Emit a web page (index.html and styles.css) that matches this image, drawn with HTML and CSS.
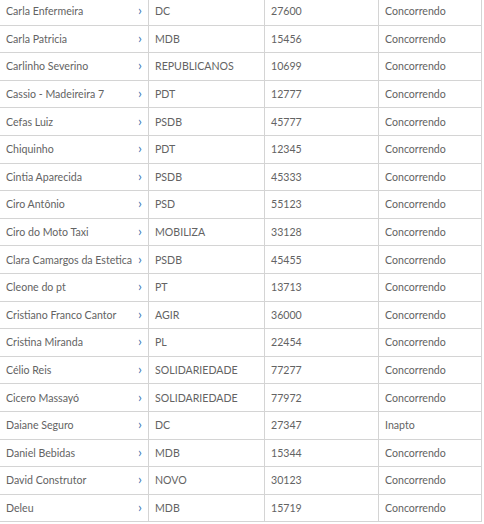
FILE: index.html
```html
<!DOCTYPE html>
<html lang="pt">
<head>
<meta charset="utf-8">
<link rel="stylesheet" href="styles.css">
</head>
<body>
<div class="table">
  <div class="row"><div class="cell name"><span>Carla Enfermeira</span><span class="chev">›</span></div><div class="cell">DC</div><div class="cell">27600</div><div class="cell">Concorrendo</div></div>
  <div class="row"><div class="cell name"><span>Carla Patricia</span><span class="chev">›</span></div><div class="cell">MDB</div><div class="cell">15456</div><div class="cell">Concorrendo</div></div>
  <div class="row"><div class="cell name"><span>Carlinho Severino</span><span class="chev">›</span></div><div class="cell">REPUBLICANOS</div><div class="cell">10699</div><div class="cell">Concorrendo</div></div>
  <div class="row"><div class="cell name"><span>Cassio - Madeireira 7</span><span class="chev">›</span></div><div class="cell">PDT</div><div class="cell">12777</div><div class="cell">Concorrendo</div></div>
  <div class="row"><div class="cell name"><span>Cefas Luiz</span><span class="chev">›</span></div><div class="cell">PSDB</div><div class="cell">45777</div><div class="cell">Concorrendo</div></div>
  <div class="row"><div class="cell name"><span>Chiquinho</span><span class="chev">›</span></div><div class="cell">PDT</div><div class="cell">12345</div><div class="cell">Concorrendo</div></div>
  <div class="row"><div class="cell name"><span>Cintia Aparecida</span><span class="chev">›</span></div><div class="cell">PSDB</div><div class="cell">45333</div><div class="cell">Concorrendo</div></div>
  <div class="row"><div class="cell name"><span>Ciro Antônio</span><span class="chev">›</span></div><div class="cell">PSD</div><div class="cell">55123</div><div class="cell">Concorrendo</div></div>
  <div class="row"><div class="cell name"><span>Ciro do Moto Taxi</span><span class="chev">›</span></div><div class="cell">MOBILIZA</div><div class="cell">33128</div><div class="cell">Concorrendo</div></div>
  <div class="row"><div class="cell name"><span>Clara Camargos da Estetica</span><span class="chev">›</span></div><div class="cell">PSDB</div><div class="cell">45455</div><div class="cell">Concorrendo</div></div>
  <div class="row"><div class="cell name"><span>Cleone do pt</span><span class="chev">›</span></div><div class="cell">PT</div><div class="cell">13713</div><div class="cell">Concorrendo</div></div>
  <div class="row"><div class="cell name"><span>Cristiano Franco Cantor</span><span class="chev">›</span></div><div class="cell">AGIR</div><div class="cell">36000</div><div class="cell">Concorrendo</div></div>
  <div class="row"><div class="cell name"><span>Cristina Miranda</span><span class="chev">›</span></div><div class="cell">PL</div><div class="cell">22454</div><div class="cell">Concorrendo</div></div>
  <div class="row"><div class="cell name"><span>Célio Reis</span><span class="chev">›</span></div><div class="cell">SOLIDARIEDADE</div><div class="cell">77277</div><div class="cell">Concorrendo</div></div>
  <div class="row"><div class="cell name"><span>Cicero Massayó</span><span class="chev">›</span></div><div class="cell">SOLIDARIEDADE</div><div class="cell">77972</div><div class="cell">Concorrendo</div></div>
  <div class="row"><div class="cell name"><span>Daiane Seguro</span><span class="chev">›</span></div><div class="cell">DC</div><div class="cell">27347</div><div class="cell">Inapto</div></div>
  <div class="row"><div class="cell name"><span>Daniel Bebidas</span><span class="chev">›</span></div><div class="cell">MDB</div><div class="cell">15344</div><div class="cell">Concorrendo</div></div>
  <div class="row"><div class="cell name"><span>David Construtor</span><span class="chev">›</span></div><div class="cell">NOVO</div><div class="cell">30123</div><div class="cell">Concorrendo</div></div>
  <div class="row"><div class="cell name"><span>Deleu</span><span class="chev">›</span></div><div class="cell">MDB</div><div class="cell">15719</div><div class="cell">Concorrendo</div></div>
</div>
</body>
</html>
```

FILE: styles.css
```css
html, body {
  margin: 0;
  padding: 0;
  background: #fff;
}
body {
  font-family: Lato, "Liberation Sans", sans-serif;
  font-size: 10.6px;
  color: #636363;
  overflow: hidden;
}
.table {
  width: 482px;
  margin-top: -2px;
}
.row {
  display: grid;
  grid-template-columns: 149px 116px 114px 103px;
  height: 27.6px;
  box-sizing: border-box;
  border-bottom: 1px solid #d4d4d4;
}
.cell {
  display: flex;
  align-items: center;
  padding-left: 6px;
  border-right: 1px solid #d4d4d4;
  white-space: nowrap;
  overflow: hidden;
}
.name {
  justify-content: space-between;
  padding-right: 6px;
}
.chev {
  color: #3c78b4;
  font-size: 14px;
  line-height: 1;
  margin-top: -2px;
}
```
